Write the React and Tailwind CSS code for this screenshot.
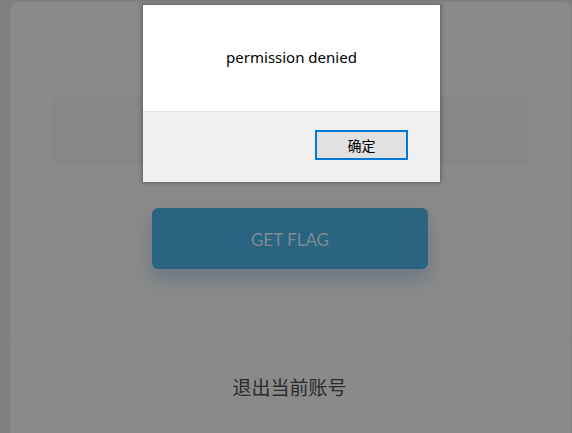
import React from "react";

export default function App() {
  return (
    <div className="relative w-[572px] h-[433px] overflow-hidden bg-[#808080] font-['Lato','Noto_Sans_CJK_SC',sans-serif]">
      <div className="ml-[10px] mt-[2px] w-[561px] h-[440px] rounded-lg bg-[#8a8a8a] flex flex-col">
        <div className="mx-[42px] mt-[93px] h-[70px] rounded-lg bg-[#868686]" />
        <div className="flex justify-center mt-[43px] pr-[1px]">
          <button className="w-[276px] h-[61px] rounded-md bg-[#2a6480] text-[#7b8c94] text-[17px] pt-[2px] shadow-[0_10px_18px_rgba(40,90,120,0.35)]">
            GET FLAG
          </button>
        </div>
        <div className="mt-[70px] h-px bg-[#7e8791]" />
        <div className="h-[94px] flex items-center justify-center pr-[2px]">
          <span className="text-[19px] text-[#2b2b2b] font-['Noto_Sans_CJK_SC',sans-serif]">退出当前账号</span>
        </div>
      </div>

      <div className="absolute left-[142px] top-[4px] w-[299px] h-[179px] border border-[#6f6f6f] bg-white flex flex-col shadow-[0_0_4px_rgba(0,0,0,0.3)]">
        <div className="h-[106px] bg-white flex items-center justify-center pb-[1px]">
          <span className="text-[15px] text-black font-['Noto_Sans','Noto_Sans_CJK_SC',sans-serif]">permission denied</span>
        </div>
        <div className="flex-1 bg-[#f0f0f0] border-t border-[#dfdfdf] flex justify-end pr-[32px] pt-[18px]">
          <button className="w-[93px] h-[30px] border-2 border-[#0078d7] bg-[#e1e1e1] text-[14px] text-black font-['Noto_Sans_CJK_SC',sans-serif]">
            确定
          </button>
        </div>
      </div>
    </div>
  );
}
